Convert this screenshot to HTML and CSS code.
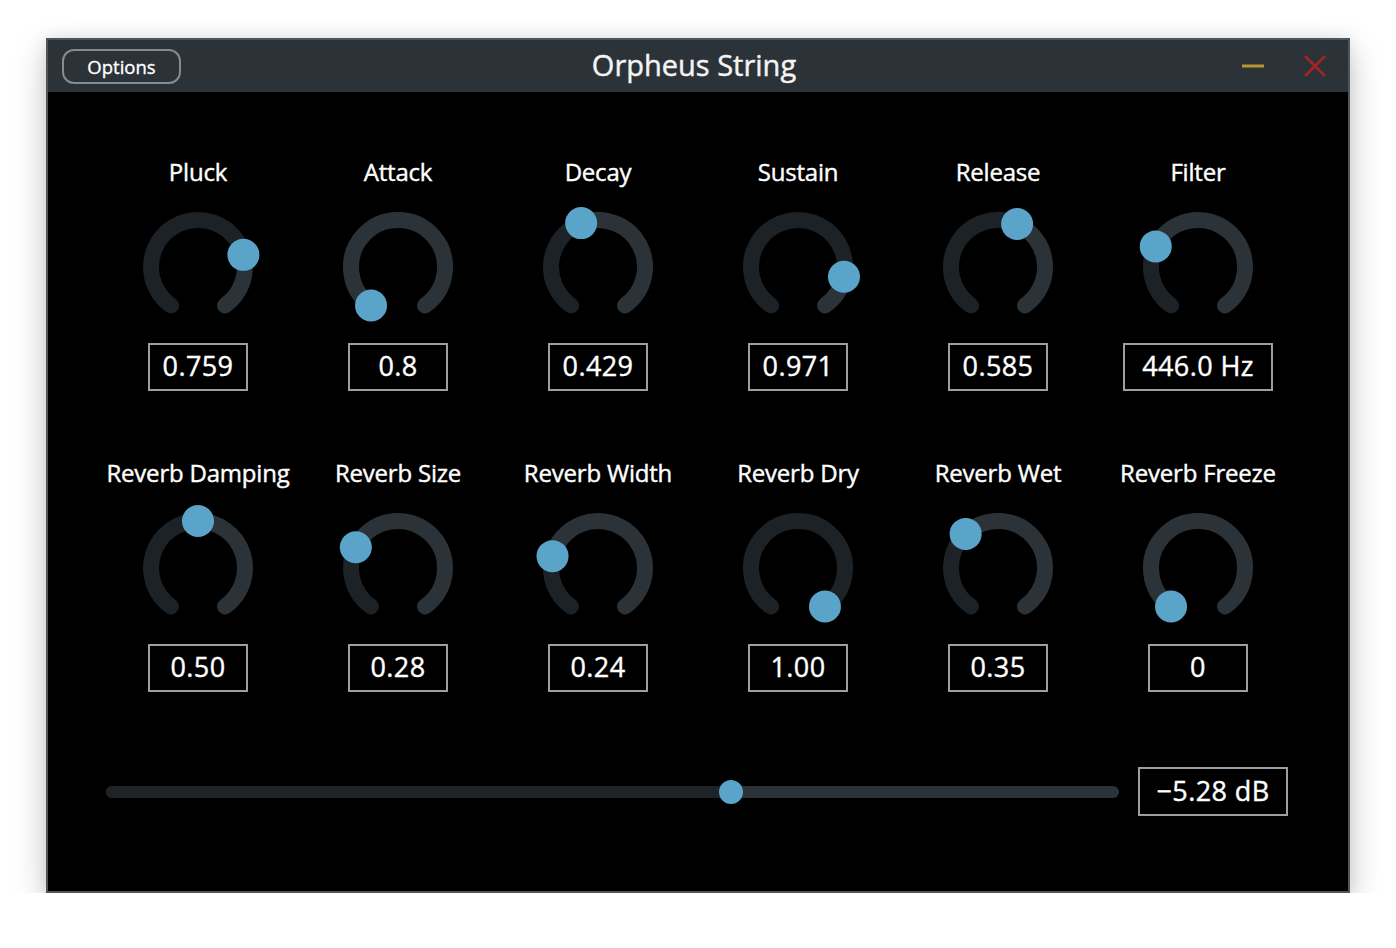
FILE: index.html
```html
<!DOCTYPE html>
<html>
<head>
<meta charset="utf-8">
<title>Orpheus String</title>
<link rel="stylesheet" href="styles.css">
</head>
<body>
<div class="window">
  <div class="titlebar">
    <div class="tb-left"><button class="options">Options</button></div>
    <div class="title">Orpheus String</div>
    <div class="tb-right">
      <svg class="icon-min" width="22" height="22" viewBox="0 0 22 22"><rect x="0" y="9.5" width="22" height="3" fill="#b8952f"/></svg>
      <svg class="icon-close" width="22" height="22" viewBox="0 0 22 22"><path d="M1 1 L21 21 M21 1 L1 21" stroke="#a52424" stroke-width="2.6" fill="none"/></svg>
    </div>
  </div>
  <div class="panel">
    <div class="grid">
      <div class="cell"><div class="label">Pluck</div><svg class="knob" data-angle="75" width="130" height="130" viewBox="0 0 130 130"></svg><div class="value">0.759</div></div>
      <div class="cell"><div class="label">Attack</div><svg class="knob" data-angle="-145" width="130" height="130" viewBox="0 0 130 130"></svg><div class="value">0.8</div></div>
      <div class="cell"><div class="label">Decay</div><svg class="knob" data-angle="-21" width="130" height="130" viewBox="0 0 130 130"></svg><div class="value">0.429</div></div>
      <div class="cell"><div class="label">Sustain</div><svg class="knob" data-angle="102" width="130" height="130" viewBox="0 0 130 130"></svg><div class="value">0.971</div></div>
      <div class="cell"><div class="label">Release</div><svg class="knob" data-angle="24" width="130" height="130" viewBox="0 0 130 130"></svg><div class="value">0.585</div></div>
      <div class="cell"><div class="label">Filter</div><svg class="knob" data-angle="-64" width="130" height="130" viewBox="0 0 130 130"></svg><div class="value wide">446.0 Hz</div></div>
      <div class="cell"><div class="label">Reverb Damping</div><svg class="knob" data-angle="0" width="130" height="130" viewBox="0 0 130 130"></svg><div class="value">0.50</div></div>
      <div class="cell"><div class="label">Reverb Size</div><svg class="knob" data-angle="-63.8" width="130" height="130" viewBox="0 0 130 130"></svg><div class="value">0.28</div></div>
      <div class="cell"><div class="label">Reverb Width</div><svg class="knob" data-angle="-75.4" width="130" height="130" viewBox="0 0 130 130"></svg><div class="value">0.24</div></div>
      <div class="cell"><div class="label">Reverb Dry</div><svg class="knob" data-angle="145" width="130" height="130" viewBox="0 0 130 130"></svg><div class="value">1.00</div></div>
      <div class="cell"><div class="label">Reverb Wet</div><svg class="knob" data-angle="-43.5" width="130" height="130" viewBox="0 0 130 130"></svg><div class="value">0.35</div></div>
      <div class="cell"><div class="label">Reverb Freeze</div><svg class="knob" data-angle="-145" width="130" height="130" viewBox="0 0 130 130"></svg><div class="value">0</div></div>
    </div>
    <div class="slider-row">
      <div class="track">
        <div class="track-fill" style="width:625px"></div>
        <div class="track-thumb" style="left:613px"></div>
      </div>
      <div class="value wide">&minus;5.28 dB</div>
    </div>
  </div>
</div>
<script src="script.js"></script>
</body>
</html>
```

FILE: styles.css
```css
html, body {
  margin: 0;
  background: #ffffff;
}
body {
  padding: 38px 46px 0;
  font-family: "Open Sans", "Noto Sans", sans-serif;
  color: #ffffff;
}
.window {
  width: 1304px;
  height: 855px;
  box-sizing: border-box;
  border: 2px solid #4e565b;
  background: #000000;
  box-shadow: 0 12px 32px rgba(0, 0, 0, 0.22), 0 0 14px rgba(0, 0, 0, 0.08);
  display: flex;
  flex-direction: column;
}
.titlebar {
  height: 52px;
  flex: none;
  background: #2b3238;
  display: grid;
  grid-template-columns: 1fr auto 1fr;
  align-items: center;
  padding: 0 22px 0 14px;
}
.tb-left {
  display: flex;
  align-items: center;
}
.options {
  width: 119px;
  height: 35px;
  box-sizing: border-box;
  border: 2px solid #858b8f;
  border-radius: 12px;
  background: transparent;
  color: #ffffff;
  font-family: "Open Sans", "Noto Sans", sans-serif;
  font-size: 18.5px;
  -webkit-text-stroke: 0.35px #ffffff;
  padding: 0;
  margin-top: 1px;
}
.title {
  font-size: 29px;
  color: #f4f4f4;
  -webkit-text-stroke: 0.45px #f4f4f4;
  line-height: 40px;
  padding-bottom: 2px;
}
.tb-right {
  display: flex;
  justify-content: flex-end;
  align-items: center;
  gap: 40px;
}
.tb-right svg {
  display: block;
}
.panel {
  flex: 1;
  padding-top: 65px;
}
.grid {
  display: grid;
  grid-template-columns: repeat(6, 200px);
  row-gap: 67px;
  padding: 0 50px;
}
.cell {
  display: flex;
  flex-direction: column;
  align-items: center;
}
.label {
  font-size: 24px;
  line-height: 30px;
  height: 30px;
  white-space: nowrap;
  letter-spacing: -0.2px;
  -webkit-text-stroke: 0.4px #ffffff;
}
.knob {
  display: block;
  margin-top: 15px;
  overflow: visible;
}
.knob .rest {
  fill: none;
  stroke: #2b3338;
  stroke-width: 16;
  stroke-linecap: round;
}
.knob .filled {
  fill: none;
  stroke: #1d2226;
  stroke-width: 16;
  stroke-linecap: round;
}
.knob .thumb {
  fill: #5ba4c9;
}
.value {
  margin-top: 11px;
  width: 100px;
  height: 48px;
  box-sizing: border-box;
  border: 2px solid #9a9fa2;
  display: flex;
  align-items: center;
  justify-content: center;
  font-size: 27px;
  white-space: nowrap;
  padding-bottom: 3px;
  letter-spacing: 0.4px;
  -webkit-text-stroke: 0.4px #ffffff;
}
.value.wide {
  width: 150px;
}
.slider-row {
  display: flex;
  align-items: flex-start;
  gap: 19px;
  margin-top: 75px;
  padding: 0 60px 0 58px;
}
.slider-row .value {
  margin-top: 0;
  height: 49px;
  flex: none;
}
.track {
  flex: 1;
  position: relative;
  height: 12px;
  margin-top: 19px;
  border-radius: 6px;
  background: #2b3238;
}
.track-fill {
  height: 12px;
  border-radius: 6px 0 0 6px;
  background: #1e2327;
}
.track-thumb {
  position: absolute;
  top: -6px;
  width: 24px;
  height: 24px;
  border-radius: 50%;
  background: #5ba4c9;
}
```

FILE: script.js
```js
(function () {
  var cx = 65, cy = 65, r = 47, start = -145, end = 145;
  function pt(d) {
    var t = d * Math.PI / 180;
    return [cx + r * Math.sin(t), cy - r * Math.cos(t)];
  }
  function arc(a0, a1) {
    var p0 = pt(a0), p1 = pt(a1);
    var large = (a1 - a0) > 180 ? 1 : 0;
    return 'M' + p0[0].toFixed(2) + ' ' + p0[1].toFixed(2) +
      ' A' + r + ' ' + r + ' 0 ' + large + ' 1 ' +
      p1[0].toFixed(2) + ' ' + p1[1].toFixed(2);
  }
  var knobs = document.querySelectorAll('.knob');
  for (var i = 0; i < knobs.length; i++) {
    var el = knobs[i];
    var a = parseFloat(el.getAttribute('data-angle'));
    var html = '';
    if (a < end) html += '<path class="rest" d="' + arc(a, end) + '"/>';
    if (a > start) html += '<path class="filled" d="' + arc(start, a) + '"/>';
    var t = pt(a);
    html += '<circle class="thumb" cx="' + t[0].toFixed(2) + '" cy="' + t[1].toFixed(2) + '" r="16"/>';
    el.innerHTML = html;
  }
})();
```
